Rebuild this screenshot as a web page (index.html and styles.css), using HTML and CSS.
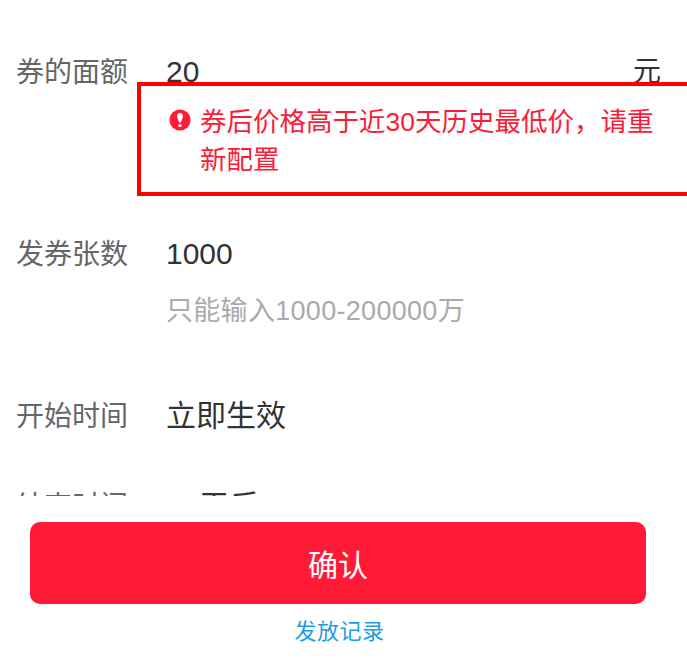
FILE: index.html
```html
<!DOCTYPE html>
<html lang="zh-CN">
<head>
  <meta charset="UTF-8">
  <title>发放优惠券</title>
  <link rel="stylesheet" href="styles.css">
</head>
<body>
  <div class="form">
    <div class="row row-amount">
      <span class="label">券的面额</span>
      <div class="field">
        <div class="value-line">
          <span class="value">20</span>
          <span class="value unit">元</span>
        </div>
      </div>
      <div class="error-box">
        <svg class="error-icon" viewBox="0 0 24 24" width="22" height="22">
          <circle cx="12" cy="12" r="11.5" fill="#ff1a38"/>
          <path d="M8.8 7.6c0-2 1.4-3.2 3.2-3.2s3.2 1.2 3.2 3.2c0 1.6-1.4 5-2.1 6.6-.2.5-.6.7-1.1.7s-.9-.2-1.1-.7c-.7-1.6-2.1-5-2.1-6.6z" fill="#fff"/>
          <circle cx="12" cy="18" r="1.7" fill="#fff"/>
        </svg>
        <p class="error-text">券后价格高于近30天历史最低价，请重新配置</p>
      </div>
    </div>
    <div class="row row-count">
      <span class="label">发券张数</span>
      <div class="field">
        <span class="value">1000</span>
        <p class="hint">只能输入1000-200000万</p>
      </div>
    </div>
    <div class="row row-start">
      <span class="label">开始时间</span>
      <div class="field">
        <span class="value">立即生效</span>
      </div>
    </div>
    <div class="row row-end">
      <span class="label">结束时间</span>
      <div class="field">
        <span class="value">30天后</span>
      </div>
    </div>
  </div>
  <div class="footer">
    <button class="confirm-btn">确认</button>
    <a class="record-link">发放记录</a>
  </div>
</body>
</html>
```

FILE: styles.css
```css
* {
  box-sizing: border-box;
}

body {
  margin: 0;
  background: #fff;
  font-family: "Liberation Sans", "Noto Sans CJK SC", sans-serif;
  overflow: hidden;
}

.form {
  height: 496px;
  overflow: hidden;
  padding: 53px 26px 0 16px;
}

.row {
  display: flex;
  position: relative;
}

.row-amount {
  height: 182px;
}

.row-count {
  height: 162px;
}

.row-start {
  height: 90px;
}

.label {
  width: 150px;
  flex-shrink: 0;
  font-size: 28px;
  line-height: 40px;
  color: #666;
}

.field {
  flex: 1;
  padding-top: 0;
}

.value-line {
  display: flex;
  justify-content: space-between;
}

.value {
  font-size: 30px;
  line-height: 38px;
  color: #333;
}

.unit {
  font-size: 28px;
}

.hint {
  margin: 20px 0 0;
  font-size: 27px;
  letter-spacing: 0.3px;
  line-height: 36px;
  color: #aaa;
}

.error-box {
  position: absolute;
  left: 121px;
  top: 29px;
  width: 560px;
  height: 114px;
  display: flex;
  padding: 17px 33px 0 28px;
  background: #fff;
  border: 4px solid #f00;
}

.error-icon {
  flex-shrink: 0;
  margin-top: 6px;
}

.error-text {
  margin: 0 0 0 9px;
  font-size: 26.5px;
  line-height: 38px;
  color: #ff1a38;
}

.footer {
  display: flex;
  flex-direction: column;
  align-items: flex-start;
  padding: 26px 0 0 30px;
}

.confirm-btn {
  width: 616px;
  height: 82px;
  border: 0;
  border-radius: 10px;
  background: #ff1a38;
  color: #fff;
  font-family: inherit;
  font-size: 30px;
}

.record-link {
  align-self: center;
  margin: 12px 0 0 -38px;
  font-size: 22px;
  letter-spacing: 0.5px;
  line-height: 32px;
  color: #1f9be6;
}
```
